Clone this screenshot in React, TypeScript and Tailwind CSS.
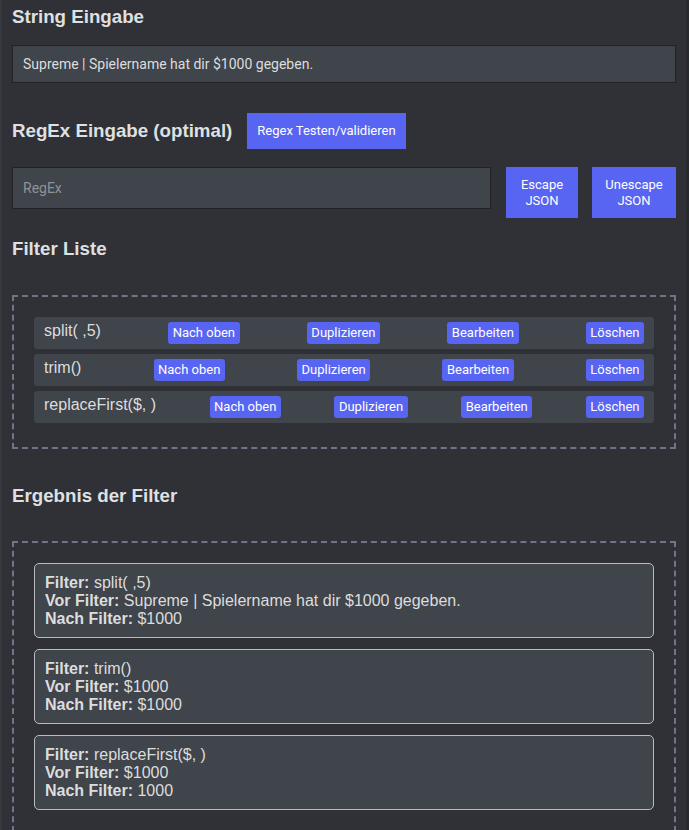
import React from "react";

const filters = ["split( ,5)", "trim()", "replaceFirst($, )"];

const results = [
    { filter: "split( ,5)", before: "Supreme | Spielername hat dir $1000 gegeben.", after: "$1000" },
    { filter: "trim()", before: "$1000", after: "$1000" },
    { filter: "replaceFirst($, )", before: "$1000", after: "1000" },
];

const btnFont = "font-['Roboto','Liberation_Sans',sans-serif]";

function Heading({ children, className = "" }: { children: React.ReactNode; className?: string }) {
    return <h3 className={"text-[18.72px] leading-[22px] font-bold text-[#dfe0e2] " + className}>{children}</h3>;
}

function SmallButton({ label }: { label: string }) {
    return (
        <button className={`h-[22px] rounded-[3px] bg-[#5865f2] px-[4.5px] text-[13px] leading-[22px] text-white ${btnFont}`}>
            {label}
        </button>
    );
}

export default function App() {
    return (
        <div className="min-h-screen border-l-2 border-r-[3px] border-l-[#36393f] border-r-[#27292d] bg-[#2f3136] px-[10px] pt-[6px] font-['Liberation_Sans',Arial,sans-serif] text-[#dcddde]">
            <Heading>String Eingabe</Heading>
            <input
                readOnly
                value="Supreme | Spielername hat dir $1000 gegeben."
                className={`mt-[17px] block h-[38px] w-full border border-[#202225] bg-[#40444b] px-[10px] text-[14px] text-[#dcddde] outline-none ${btnFont}`}
            />

            <div className="mt-[30px] flex h-[36px] items-center gap-[15px]">
                <Heading>RegEx Eingabe (optimal)</Heading>
                <button className={`h-[36px] bg-[#5865f2] px-[10px] text-[13px] text-white ${btnFont}`}>
                    Regex Testen/validieren
                </button>
            </div>

            <div className="mt-[18px] flex items-start">
                <input
                    placeholder="RegEx"
                    className={`block h-[42px] flex-1 border border-[#202225] bg-[#40444b] px-[10px] text-[14px] text-[#dcddde] outline-none placeholder:text-[#8e9297] ${btnFont}`}
                />
                <button className={`ml-[15px] h-[51px] w-[72px] bg-[#5865f2] text-[13px] leading-[16px] text-white ${btnFont}`}>
                    Escape
                    <br />
                    JSON
                </button>
                <button className={`ml-[14px] h-[51px] w-[84px] bg-[#5865f2] text-[13px] leading-[16px] text-white ${btnFont}`}>
                    Unescape
                    <br />
                    JSON
                </button>
            </div>

            <Heading className="mt-[20px]">Filter Liste</Heading>

            <div className="mt-[35px] flex flex-col gap-[5px] border-2 border-dashed border-[#72738a] p-[20px] pb-[24px]">
                {filters.map((f) => (
                    <div key={f} className="flex h-[32px] items-center justify-between rounded-[3px] bg-[#40444b] px-[10px]">
                        <span className="mb-[5px] text-[16px] leading-[18px] text-[#dcddde]">{f}</span>
                        <SmallButton label="Nach oben" />
                        <SmallButton label="Duplizieren" />
                        <SmallButton label="Bearbeiten" />
                        <SmallButton label="Löschen" />
                    </div>
                ))}
            </div>

            <Heading className="mt-[36px]">Ergebnis der Filter</Heading>

            <div className="mt-[34px] flex flex-col gap-[11px] border-2 border-dashed border-[#72738a] p-[20px]">
                {results.map((r) => (
                    <div key={r.filter} className="rounded-[5px] border border-[#b9bbbe] bg-[#40444b] px-[10px] pt-[10px] pb-[9px] text-[16px] leading-[18px] text-[#dcddde]">
                        <div>
                            <b>Filter:</b> {r.filter}
                        </div>
                        <div>
                            <b>Vor Filter:</b> {r.before}
                        </div>
                        <div>
                            <b>Nach Filter:</b> {r.after}
                        </div>
                    </div>
                ))}
            </div>
        </div>
    );
}
